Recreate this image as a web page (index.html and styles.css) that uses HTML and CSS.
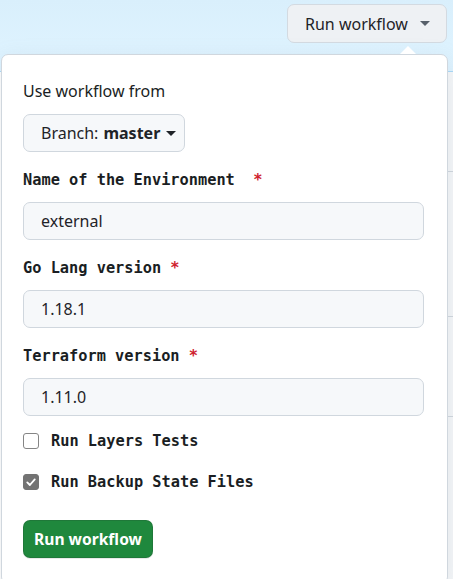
FILE: index.html
```html
<!DOCTYPE html>
<html lang="en">
<head>
<meta charset="utf-8">
<title>Run workflow</title>
<link rel="stylesheet" href="styles.css">
</head>
<body>
<div class="page">
  <header class="header">
    <button class="btn-top" type="button">Run workflow <span class="caret"></span></button>
  </header>
  <div class="content">
    <div class="main"></div>
    <aside class="side">
      <div class="side-row"></div>
      <div class="side-row tall"></div>
      <div class="side-row"></div>
    </aside>
  </div>

  <div class="popup">
    <div class="popup-arrow"></div>
    <form class="popup-body">
      <div class="title">Use workflow from</div>
      <button class="btn-branch" type="button">Branch: <b>master</b> <span class="caret"></span></button>

      <label class="field-label first">Name of the Environment  <span class="req">*</span></label>
      <div class="input">external</div>

      <label class="field-label">Go Lang version <span class="req">*</span></label>
      <div class="input">1.18.1</div>

      <label class="field-label">Terraform version <span class="req">*</span></label>
      <div class="input">1.11.0</div>

      <label class="check-row first"><span class="box"></span><span class="check-label">Run Layers Tests</span></label>
      <label class="check-row"><span class="box checked"><svg viewBox="0 0 16 16" width="12" height="12"><path d="M3 8.5 L6.5 12 L13 4.5" fill="none" stroke="#fff" stroke-width="2.4" stroke-linecap="round" stroke-linejoin="round"/></svg></span><span class="check-label">Run Backup State Files</span></label>

      <button class="btn-run" type="button">Run workflow</button>
    </form>
  </div>
</div>
</body>
</html>
```

FILE: styles.css
```css
* { box-sizing: border-box; }
html, body { margin: 0; padding: 0; }
body {
  width: 453px;
  height: 579px;
  overflow: hidden;
  font-family: "Noto Sans", "Open Sans", sans-serif;
  color: #1f2328;
  background: #ffffff;
}
.page {
  position: relative;
  width: 453px;
  height: 579px;
}
.header {
  height: 72px;
  background: linear-gradient(180deg, #d9effc 0%, #ddf2fe 60%, #def3ff 100%);
  border-bottom: 1px solid #a9d9f8;
  display: flex;
  justify-content: flex-end;
  align-items: flex-start;
  padding: 4px 6px 0 0;
}
.btn-top {
  height: 39px;
  width: 160px;
  background: #eef1f4;
  border: 1px solid #d3dae1;
  border-radius: 7px;
  font-family: inherit;
  font-size: 16px;
  color: #1f2328;
  display: flex;
  align-items: center;
  padding: 0 0 0 17px;
  gap: 12px;
}
.caret {
  display: inline-block;
  width: 0;
  height: 0;
  border-left: 5px solid transparent;
  border-right: 5px solid transparent;
  border-top: 5px solid #57606a;
}
.content {
  display: flex;
  height: 507px;
}
.main { flex: 1; background: #ffffff; }
.side {
  width: 8px;
  background: #f6f8fa;
  display: flex;
  flex-direction: column;
}
.side-row { height: 100px; border-bottom: 1px solid #d0d7de; }
.side-row.tall { height: 145px; }

.popup {
  position: absolute;
  left: 1px;
  top: 54px;
  width: 447px;
  height: 530px;
  background: #ffffff;
  border: 1px solid #d0d7de;
  border-radius: 7px;
  box-shadow: 0 8px 24px rgba(140, 149, 159, 0.2);
}
.popup-arrow {
  position: absolute;
  top: -9px;
  left: 398px;
  width: 0;
  height: 0;
  border-left: 8px solid transparent;
  border-right: 8px solid transparent;
  border-bottom: 8px solid #ffffff;
}
.popup-body {
  display: flex;
  flex-direction: column;
  align-items: flex-start;
  padding: 24px 0 0 21px;
  margin: 0;
}
.title {
  font-size: 16px;
  line-height: 24px;
  height: 24px;
  color: #1a1e23;
}
.btn-branch {
  margin-top: 11px;
  height: 38px;
  width: 162px;
  background: #f6f8fa;
  border: 1px solid #d0d7de;
  border-radius: 7px;
  font-family: inherit;
  font-size: 16px;
  color: #1f2328;
  display: flex;
  align-items: center;
  padding: 0 0 0 17px;
  gap: 0;
}
.btn-branch b { font-weight: 700; margin-left: 5px; }
.btn-branch .caret { margin-left: 6px; border-top-color: #1f2328; }
.field-label {
  margin-top: 16px;
  font-family: "DejaVu Sans Mono", "Liberation Mono", monospace;
  font-weight: 700;
  font-size: 15.3px;
  line-height: 24px;
  height: 24px;
  white-space: pre;
  color: #1a1e23;
}
.field-label.first { margin-top: 16px; }
.req { color: #cf222e; }
.input {
  margin-top: 10px;
  width: 401px;
  height: 38px;
  background: #f6f8fa;
  border: 1px solid #d0d7de;
  border-radius: 7px;
  font-size: 16px;
  line-height: 36px;
  padding-left: 17px;
  color: #1f2328;
}
.check-row {
  display: flex;
  align-items: center;
  gap: 12px;
  height: 24px;
  margin-top: 17px;
}
.check-row.first { margin-top: 13px; }
.box {
  width: 16px;
  height: 16px;
  border: 1.5px solid #858585;
  border-radius: 3px;
  background: #ffffff;
  display: flex;
  align-items: center;
  justify-content: center;
}
.box.checked { background: #737373; border-color: #737373; }
.check-label {
  font-family: "DejaVu Sans Mono", "Liberation Mono", monospace;
  font-weight: 700;
  font-size: 15.3px;
  color: #1a1e23;
}
.btn-run {
  margin-top: 26px;
  height: 38px;
  width: 130px;
  background: #1f883d;
  border: 1px solid rgba(31, 35, 40, 0.15);
  border-radius: 7px;
  color: #ffffff;
  font-family: inherit;
  font-weight: 700;
  font-size: 15.6px;
  padding: 0;
  box-shadow: 0 1px 0 rgba(31, 35, 40, 0.1);
}
```
